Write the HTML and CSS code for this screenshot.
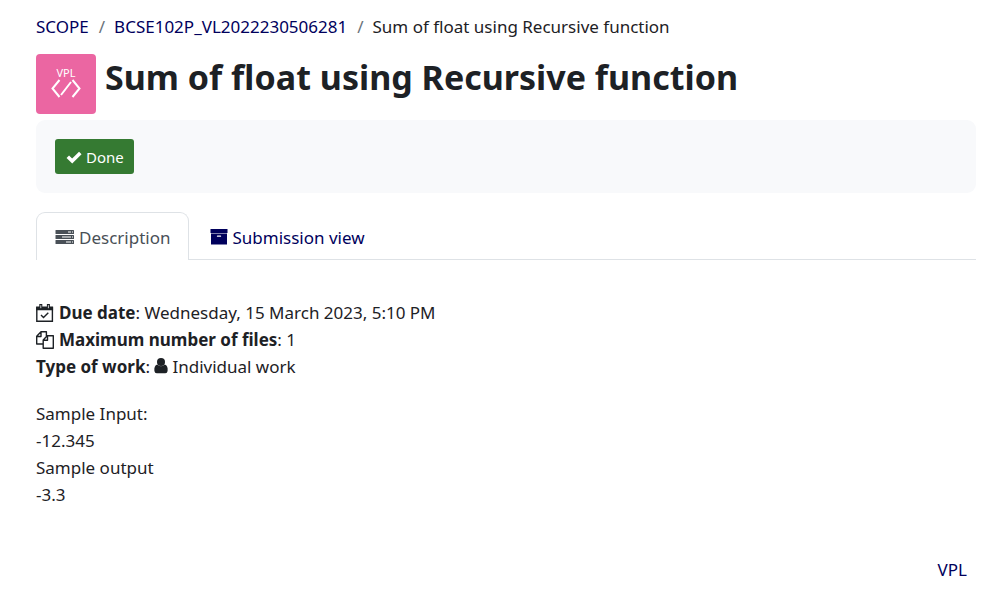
FILE: index.html
```html
<!DOCTYPE html>
<html lang="en">
<head>
<meta charset="utf-8">
<title>Sum of float using Recursive function</title>
<meta name="viewport" content="width=device-width, initial-scale=1">
<link rel="stylesheet" href="styles.css">
</head>
<body>
<nav aria-label="Breadcrumb">
  <ol class="breadcrumb">
    <li><a href="#">SCOPE</a></li>
    <li><a href="#">BCSE102P_VL2022230506281</a></li>
    <li>Sum of float using Recursive function</li>
  </ol>
</nav>
<header class="page-header">
  <div class="activity-icon">
    <span class="activity-label">VPL</span>
    <svg width="30" height="20" viewBox="0 0 30 20" fill="none" stroke="#fff" stroke-width="2" aria-hidden="true"><path d="M8.500 1 1.500 9.500 8.500 18M21.500 1 28.500 9.500 21.500 18M20 3 10 16"/></svg>
  </div>
  <h1>Sum of float using Recursive function</h1>
</header>
<main>
  <section class="completion" aria-label="Completion">
    <button class="done" type="button"><svg width="16" height="16" viewBox="0 0 16 16" aria-hidden="true"><path fill="none" stroke="currentColor" stroke-width="3.600" d="M1.800 7.800 6.200 12 14.300 4"/></svg>Done</button>
  </section>
  <nav class="tabs" aria-label="Activity">
    <a class="tab active" href="#" aria-current="page"><svg width="20" height="16" viewBox="0 0 20 16" aria-hidden="true"><g fill="currentColor"><rect x="0.500" y="1" width="18.500" height="4" rx=".5"/><rect x="0.500" y="6" width="18.500" height="4" rx=".5"/><rect x="0.500" y="11" width="18.500" height="4" rx=".5"/></g><path stroke="#fff" stroke-width="1.200" d="M13 3h3M7 8h9M11 13h5M17 3h1M17 8h1M17 13h1"/></svg>Description</a>
    <a class="tab" href="#"><svg width="18" height="16" viewBox="0 0 18 16" fill="currentColor" aria-hidden="true"><path d="M.5 0h17v4H.5zM1 4.600h16v10.900H1z"/><path stroke="#fff" stroke-width="1.300" stroke-linecap="round" d="M7.500 7.200h3"/></svg>Submission view</a>
  </nav>
  <section class="details">
    <div><svg class="icon" width="18" height="18" viewBox="0 0 18 18" aria-hidden="true"><path fill="none" stroke="currentColor" stroke-width="1.400" d="M.8 4h15.600v13.200H.8zM5 11l2.500 2.500L12.300 8.700"/><path fill="currentColor" d="M.1 2.500h17v3.800H.1zM3.300 0h3v4.500h-3zM10.900 0h3v4.500h-3z"/><path stroke="#fff" d="M4.800 1.200v3M12.400 1.200v3" stroke-width=".8"/></svg><b>Due date</b>: Wednesday, 15 March 2023, 5:10 PM</div>
    <div><svg class="icon" width="18" height="18" viewBox="0 0 18 18" fill="none" stroke="currentColor" stroke-width="1.400" stroke-linejoin="round" aria-hidden="true"><path d="M7.200 13H.7V5.200L5 .8h5.400V5M5 .8v4.700H.7M7.200 17.200V9l4-4.200h6.100v12.400zM11.500 4.800v4.500H7.200"/></svg><b>Maximum number of files</b>: 1</div>
    <div><b>Type of work</b>: <svg class="user" width="14" height="16" viewBox="0 0 14 16" fill="currentColor" aria-hidden="true"><circle cx="7" cy="4" r="4"/><path d="M3.200 6.500Q7 10 10.800 6.500C13 7 14 9.500 13.600 13q-.3 2.200-2.300 2.200H2.700Q.7 15.200.4 13C0 9.500 1 7 3.200 6.500z"/></svg>Individual work</div>
  </section>
  <p class="sample">Sample Input:<br>-12.345<br>Sample output<br>-3.3</p>
</main>
<footer class="footer"><a href="#">VPL</a></footer>
</body>
</html>
```
FILE: styles.css
```css
* { box-sizing: border-box; }
body {
  margin: 0;
  padding: 13px 32px 0 36px;
  background: #fff;
  color: #1d2125;
  font: 17px/27px "Noto Sans", "Open Sans", sans-serif;
}
a { color: #00005c; text-decoration: none; }
svg { flex: none; }
.breadcrumb {
  display: flex;
  flex-wrap: wrap;
  margin: 0 0 14px;
  padding: 0;
  list-style: none;
}
.breadcrumb li + li::before { content: "/"; color: #6a737b; padding: 0 9px 0 10px; }
.page-header { display: flex; gap: 9px; margin-bottom: 6px; }
.activity-icon {
  display: flex;
  flex: none;
  flex-direction: column;
  align-items: center;
  width: 60px;
  height: 60px;
  padding-top: 13px;
  border-radius: 4px;
  background: #eb66a2;
  color: #fff;
}
.activity-label { font-size: 11px; line-height: 12px; }
h1 { margin: 0; font-size: 34px; line-height: 46px; font-weight: 700; }
.completion {
  margin-bottom: 19px;
  padding: 19px;
  border-radius: 9px;
  background: #f8f9fb;
}
.done {
  display: flex;
  align-items: center;
  gap: 4px;
  height: 35px;
  padding: 0 10px 0 11px;
  border: 0;
  border-radius: 3px;
  background: #357a32;
  color: #fff;
  font: 15px/24px "Noto Sans", "Open Sans", sans-serif;
}
.tabs { display: flex; border-bottom: 1px solid #dee2e6; }
.tab {
  display: flex;
  align-items: center;
  gap: 4px;
  height: 48px;
  margin-bottom: -1px;
  padding: 1px 19px 0 20px;
  border: 1px solid transparent;
  border-bottom: 0;
  border-radius: 9px 9px 0 0;
}
.active {
  padding: 1px 18px 0 18px;
  border-color: #dee2e6;
  background: #fff;
  color: #495057;
}
.details { margin: 39px 0 20px; }
.icon { margin-right: 5px; vertical-align: -3px; }
.user { margin-right: 4px; vertical-align: -1px; }
.sample { margin: 0; }
.footer { margin-top: 48px; padding-right: 9px; text-align: right; }
```
